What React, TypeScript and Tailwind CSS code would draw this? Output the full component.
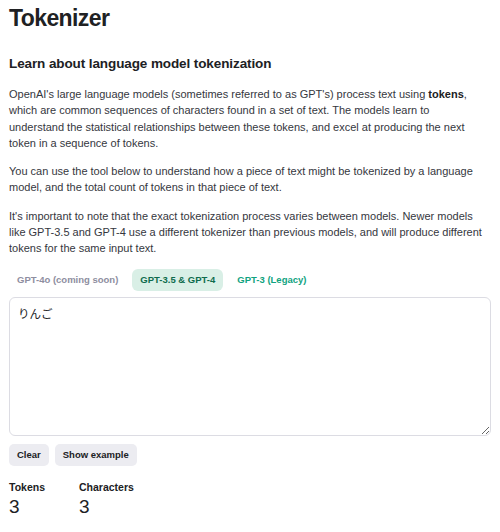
import React from "react";

const L = ({ children }: { children: React.ReactNode }) => (
  <span className="block whitespace-nowrap">{children}</span>
);

export default function App() {
  return (
    <div
      className="w-[500px] h-[532px] bg-white text-[#202123] px-[9px] pt-[4px] overflow-hidden"
      style={{ fontFamily: '"Liberation Sans", "Noto Sans CJK JP", sans-serif' }}
    >
      <h1 className="text-[23px] font-bold leading-[28px] tracking-[-0.6px]">Tokenizer</h1>
      <h2 className="mt-[23px] text-[13.5px] font-bold leading-[18px] tracking-[-0.1px]">
        Learn about language model tokenization
      </h2>
      <div className="mt-[13px] text-[11px] leading-[16.3px] text-[#353740] flex flex-col gap-[12px]">
        <p>
          <L>
            OpenAI's large language models (sometimes referred to as GPT's) process text using{" "}
            <span className="font-bold text-[#202123]">tokens</span>,
          </L>
          <L>which are common sequences of characters found in a set of text. The models learn to</L>
          <L>understand the statistical relationships between these tokens, and excel at producing the next</L>
          <L>token in a sequence of tokens.</L>
        </p>
        <p>
          <L>You can use the tool below to understand how a piece of text might be tokenized by a language</L>
          <L>model, and the total count of tokens in that piece of text.</L>
        </p>
        <p>
          <L>It's important to note that the exact tokenization process varies between models. Newer models</L>
          <L>like GPT-3.5 and GPT-4 use a different tokenizer than previous models, and will produce different</L>
          <L>tokens for the same input text.</L>
        </p>
      </div>
      <div className="mt-[12px] flex gap-[6px] text-[9.5px] font-bold">
        <button className="px-[8px] h-[22px] rounded-[6px] text-[#8e8ea0]">GPT-4o (coming soon)</button>
        <button className="px-[8px] h-[22px] rounded-[6px] bg-[#d9efe6] text-[#0e6b4d]">GPT-3.5 &amp; GPT-4</button>
        <button className="px-[8px] h-[22px] rounded-[6px] text-[#10a37f]">GPT-3 (Legacy)</button>
      </div>
      <textarea
        defaultValue="りんご"
        className="mt-[6px] block w-[482px] h-[139px] border border-[#dcdce3] rounded-[6px] px-[8px] py-[8px] text-[11.5px] leading-[16px] text-[#202123] outline-none"
      />
      <div className="mt-[8px] flex gap-[6px] text-[9.5px] font-bold">
        <button className="h-[22px] px-[8px] rounded-[5px] bg-[#ececf1] text-[#202123]">Clear</button>
        <button className="h-[22px] px-[8px] rounded-[5px] bg-[#ececf1] text-[#202123]">Show example</button>
      </div>
      <div className="mt-[14px] flex gap-[34px]">
        <div>
          <div className="text-[10.5px] font-bold leading-[14px]">Tokens</div>
          <div className="mt-[3px] text-[19px] leading-[20px]">3</div>
        </div>
        <div>
          <div className="text-[10.5px] font-bold leading-[14px]">Characters</div>
          <div className="mt-[3px] text-[19px] leading-[20px]">3</div>
        </div>
      </div>
    </div>
  );
}
